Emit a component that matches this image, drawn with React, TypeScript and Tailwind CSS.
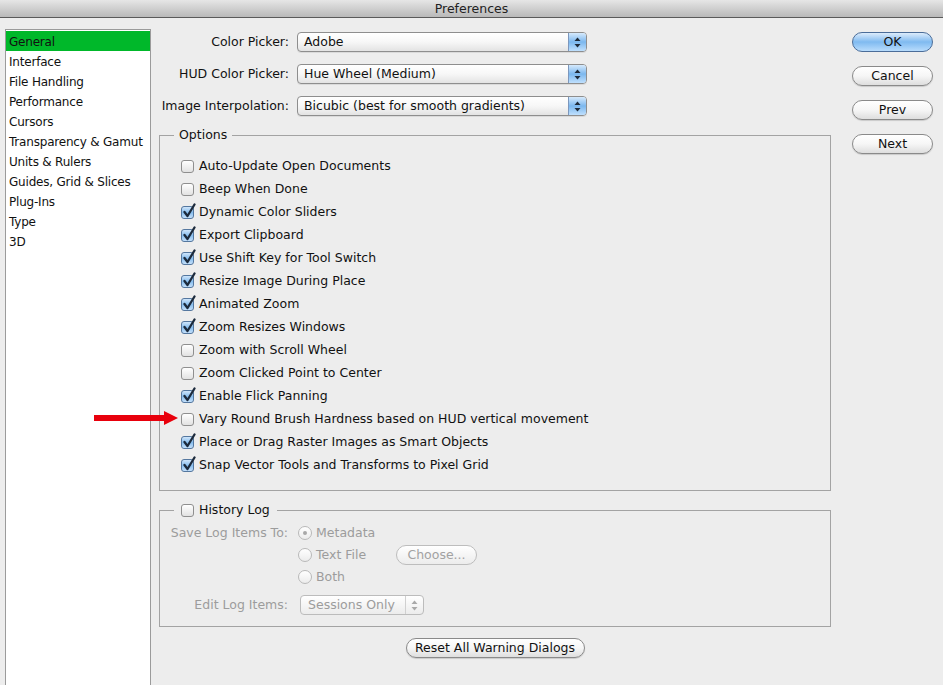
import React from 'react';

const font = { fontFamily: '"DejaVu Sans", "Liberation Sans", sans-serif' };

const sections = [
  'General',
  'Interface',
  'File Handling',
  'Performance',
  'Cursors',
  'Transparency & Gamut',
  'Units & Rulers',
  'Guides, Grid & Slices',
  'Plug-Ins',
  'Type',
  '3D',
];

const options: [string, boolean][] = [
  ['Auto-Update Open Documents', false],
  ['Beep When Done', false],
  ['Dynamic Color Sliders', true],
  ['Export Clipboard', true],
  ['Use Shift Key for Tool Switch', true],
  ['Resize Image During Place', true],
  ['Animated Zoom', true],
  ['Zoom Resizes Windows', true],
  ['Zoom with Scroll Wheel', false],
  ['Zoom Clicked Point to Center', false],
  ['Enable Flick Panning', true],
  ['Vary Round Brush Hardness based on HUD vertical movement', false],
  ['Place or Drag Raster Images as Smart Objects', true],
  ['Snap Vector Tools and Transforms to Pixel Grid', true],
];

function Check({ on }: { on?: boolean }) {
  return (
    <span className="relative shrink-0 w-[13px] h-[13px]">
      <span
        className={
          on
            ? 'block w-[13px] h-[13px] rounded-[3px] border border-[#54779f] bg-linear-to-b from-[#cfe5fa] via-[#86bdee] to-[#c4e0fb]'
            : 'block w-[13px] h-[13px] rounded-[3px] border border-[#8f8f8f] bg-linear-to-b from-white to-[#e2e2e2]'
        }
      />
      {on && (
        <svg className="absolute left-[1px] top-[-3px]" width="14" height="15" viewBox="0 0 14 15">
          <path d="M2.5 9 L5.5 13 L12.5 1.5" fill="none" stroke="#1c2a3c" strokeWidth="2.3" strokeLinecap="round" strokeLinejoin="round" />
        </svg>
      )}
    </span>
  );
}

function Radio({ on }: { on?: boolean }) {
  return (
    <span className="shrink-0 w-[14px] h-[14px] rounded-full border border-[#b9b9b9] bg-linear-to-b from-white to-[#ececec] flex items-center justify-center">
      {on && <span className="w-[4px] h-[4px] rounded-full bg-[#a8a8a8]" />}
    </span>
  );
}

function Arrows({ dim }: { dim?: boolean }) {
  const c = dim ? '#a9a9a9' : '#1f2a38';
  return (
    <svg width="7" height="11" viewBox="0 0 7 11">
      <path d="M3.5 0.5 L6.5 4 L0.5 4 Z" fill={c} />
      <path d="M3.5 10.5 L6.5 7 L0.5 7 Z" fill={c} />
    </svg>
  );
}

function Select({ value }: { value: string }) {
  return (
    <div className="flex h-[20px] w-[290px] rounded-[4px] border border-[#8e8e8e] overflow-hidden bg-linear-to-b from-white via-[#f7f7f7] to-[#e3e3e3] shadow-[0_1px_0_rgba(0,0,0,0.08)]">
      <div className="flex-1 pl-[6px] leading-[18px] text-[#111]">{value}</div>
      <div className="w-[18px] flex items-center justify-center border-l border-[#7c97bd] bg-linear-to-b from-[#d6eafc] via-[#7bb7ee] to-[#bfe0fd]">
        <Arrows />
      </div>
    </div>
  );
}

function PillButton({ label, primary, dim, className }: { label: string; primary?: boolean; dim?: boolean; className?: string }) {
  const look = primary
    ? 'border-[#4b6d99] bg-linear-to-b from-[#dcecfb] via-[#7fbaf0] to-[#b8dcfc] text-[#111]'
    : dim
      ? 'border-[#bdbdbd] bg-linear-to-b from-white to-[#ececec] text-[#a2a2a2]'
      : 'border-[#8a8a8a] bg-linear-to-b from-white via-[#f6f6f6] to-[#dedede] text-[#111] shadow-[0_1px_1px_rgba(0,0,0,0.15)]';
  return (
    <div className={`h-[20px] rounded-full border flex items-center justify-center leading-[18px] ${look} ${className ?? ''}`}>
      {label}
    </div>
  );
}

export default function App() {
  return (
    <div className="relative w-[943px] h-[685px] overflow-hidden bg-[#ededed] text-[12.5px] text-[#111] flex flex-col" style={font}>
      {/* title bar */}
      <div className="h-[18px] shrink-0 border-b border-[#5a5a5a] bg-linear-to-b from-[#e6e6e6] to-[#b9b9b9] flex items-center justify-center">
        <span className="text-[12.5px] text-[#222] leading-[16px]">Preferences</span>
      </div>

      <div className="flex flex-1 min-h-0">
        {/* sidebar */}
        <div className="ml-[5px] mt-[11px] w-[146px] shrink-0 bg-white border border-[#9b9b9b] pt-[1px] h-[700px] overflow-hidden">
          {sections.map((s, i) => (
            <div key={s} className={`h-[20px] leading-[22px] pl-[3px] text-[12px] tracking-[-0.2px] whitespace-nowrap ${i === 0 ? 'bg-[#00b82a]' : ''}`}>
              {s}
            </div>
          ))}
        </div>

        {/* main */}
        <div className="ml-[8px] mt-[14px] w-[672px] shrink-0 flex flex-col">
          <div className="flex flex-col gap-[12px]">
            {[
              ['Color Picker:', 'Adobe'],
              ['HUD Color Picker:', 'Hue Wheel (Medium)'],
              ['Image Interpolation:', 'Bicubic (best for smooth gradients)'],
            ].map(([l, v]) => (
              <div key={l} className="flex items-center gap-[8px]">
                <div className="w-[130px] text-right whitespace-nowrap">{l}</div>
                <Select value={v} />
              </div>
            ))}
          </div>

          <fieldset className="mt-[11px] border border-[#a3a3a3] pl-[21px] pt-[12px] pb-[13px]">
            <legend className="ml-[-7px] px-[5px] leading-[16px]">Options</legend>
            {options.map(([label, on]) => (
              <div key={label} className="h-[23px] flex items-center gap-[5px]">
                <Check on={on} />
                <span>{label}</span>
              </div>
            ))}
          </fieldset>

          <fieldset className="mt-[11px] border border-[#a3a3a3] pt-[4px] pb-[11px]">
            <legend className="ml-[14px] px-[7px] leading-[16px] flex items-center gap-[5px]">
              <Check />
              <span>History Log</span>
            </legend>
            <div className="grid grid-cols-[128px_1fr] gap-x-[10px] text-[#9c9c9c]">
              <div className="h-[22px] leading-[22px] text-right">Save Log Items To:</div>
              <div className="h-[22px] flex items-center gap-[4px]">
                <Radio on />
                <span>Metadata</span>
              </div>
              <div />
              <div className="h-[22px] flex items-center">
                <Radio />
                <span className="ml-[4px] w-[80px]">Text File</span>
                <PillButton label="Choose..." dim className="w-[81px]" />
              </div>
              <div />
              <div className="h-[22px] flex items-center gap-[4px]">
                <Radio />
                <span>Both</span>
              </div>
              <div className="mt-[7px] h-[20px] leading-[20px] text-right">Edit Log Items:</div>
              <div className="mt-[7px] pl-[2px]">
                <div className="flex h-[20px] w-[124px] rounded-[4px] border border-[#bcbcbc] bg-linear-to-b from-white to-[#ececec]">
                  <div className="flex-1 pl-[7px] leading-[18px]">Sessions Only</div>
                  <div className="w-[18px] border-l border-[#d0d0d0] flex items-center justify-center">
                    <Arrows dim />
                  </div>
                </div>
              </div>
            </div>
          </fieldset>

          <div className="mt-[11px] flex justify-center">
            <PillButton label="Reset All Warning Dialogs" className="w-[179px]" />
          </div>
        </div>

        {/* dialog buttons */}
        <div className="ml-[21px] mt-[14px] w-[81px] flex flex-col gap-[14px]">
          <PillButton label="OK" primary />
          <PillButton label="Cancel" />
          <PillButton label="Prev" />
          <PillButton label="Next" />
        </div>
      </div>

      {/* red annotation arrow */}
      <svg className="absolute left-[94px] top-[411px]" width="84" height="14" viewBox="0 0 84 14">
        <rect x="0" y="4" width="72" height="6" fill="#e8000c" />
        <path d="M70 0 L84 7 L70 14 Z" fill="#e8000c" />
      </svg>
    </div>
  );
}
